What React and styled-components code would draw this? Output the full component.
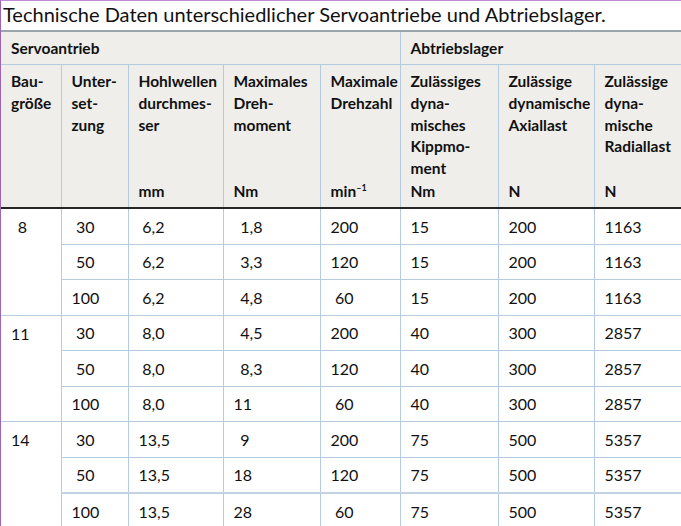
import styled, { createGlobalStyle } from "styled-components";

const Global = createGlobalStyle`
  html, body {
    margin: 0;
    padding: 0;
    background: #ffffff;
    overflow: hidden;
  }
`;

const Page = styled.div`
  width: 720px;
  border-top: 1px solid #c08ad0;
  border-left: 1px solid #a064b4;
  font-family: Lato, "Open Sans", sans-serif;
  color: #111111;
`;

const Title = styled.h1`
  margin: 0;
  height: 29px;
  padding-left: 2px;
  font-size: 20px;
  font-weight: 400;
  line-height: 26px;
  white-space: nowrap;
`;

const Table = styled.table`
  border-collapse: collapse;
  table-layout: fixed;
  width: 693px;
  border-top: 2px solid #9aa6ae;
  font-size: 15.5px;
  font-variant-numeric: tabular-nums;
`;

const GroupHead = styled.th`
  background: #efeeeb;
  text-align: left;
  font-weight: 700;
  height: 32px;
  padding: 0 10px;
  border-bottom: 1px solid #b4cbe2;
  border-right: ${(p) => (p.$divide ? "1px solid #b4cbe2" : "none")};
`;

const ColHead = styled.th`
  background: #efeeeb;
  text-align: left;
  vertical-align: top;
  font-weight: 700;
  padding: 6px 0 4px 10px;
  border-right: 1px solid #b4cbe2;
  border-bottom: 2px solid #262626;
  white-space: nowrap;
`;

const Stack = styled.div`
  display: flex;
  flex-direction: column;
  height: 132px;
  line-height: 21.8px;
`;

const Unit = styled.div`
  margin-top: auto;
`;

const Cell = styled.td`
  height: 34.5px;
  padding: 0 0 0 10px;
  font-size: 16px;
  vertical-align: middle;
  border-right: 1px solid #b4cbe2;
  border-bottom: ${(p) => (p.$thick ? "2px solid #c3d3e6" : "1px solid #b4cbe2")};
  white-space: nowrap;
`;

const GroupCell = styled(Cell)`
  vertical-align: top;
  padding-top: 8px;
`;

const Right = styled.span`
  display: inline-block;
  width: ${(p) => p.$w}px;
  text-align: right;
`;

const Dec = ({ v, w }) => {
  const [i, f] = v.split(",");
  return (
    <span>
      <Right $w={w}>{i}</Right>
      {f !== undefined ? "," + f : ""}
    </span>
  );
};

const data = [
  {
    size: "8",
    rows: [
      ["30", "6,2", "1,8", "200", "15", "200", "1163"],
      ["50", "6,2", "3,3", "120", "15", "200", "1163"],
      ["100", "6,2", "4,8", "60", "15", "200", "1163"],
    ],
  },
  {
    size: "11",
    rows: [
      ["30", "8,0", "4,5", "200", "40", "300", "2857"],
      ["50", "8,0", "8,3", "120", "40", "300", "2857"],
      ["100", "8,0", "11", "60", "40", "300", "2857"],
    ],
  },
  {
    size: "14",
    rows: [
      ["30", "13,5", "9", "200", "75", "500", "5357"],
      ["50", "13,5", "18", "120", "75", "500", "5357"],
      ["100", "13,5", "28", "60", "75", "500", "5357"],
    ],
  },
];

const heads = [
  [["Bau-", "größe"], ""],
  [["Unter-", "set-", "zung"], ""],
  [["Hohlwellen", "durchmes-", "ser"], "mm"],
  [["Maximales", "Dreh-", "moment"], "Nm"],
  [["Maximale", "Drehzahl"], <>min<sup style={{ fontSize: "9px", verticalAlign: "6px" }}>–1</sup></>],
  [["Zulässiges", "dyna-", "misches", "Kippmo-", "ment"], "Nm"],
  [["Zulässige", "dynamische", "Axiallast"], "N"],
  [["Zulässige", "dyna-", "mische", "Radiallast"], "N"],
];

const App = () => {
  return (
    <Page>
      <Global />
      <Title>Technische Daten unterschiedlicher Servoantriebe und Abtriebslager.</Title>
      <Table>
        <colgroup>
          <col style={{ width: 60 }} />
          <col style={{ width: 67 }} />
          <col style={{ width: 95 }} />
          <col style={{ width: 97 }} />
          <col style={{ width: 80 }} />
          <col style={{ width: 98 }} />
          <col style={{ width: 96 }} />
          <col style={{ width: 100 }} />
        </colgroup>
        <thead>
          <tr>
            <GroupHead colSpan={5} $divide>
              Servoantrieb
            </GroupHead>
            <GroupHead colSpan={3}>Abtriebslager</GroupHead>
          </tr>
          <tr>
            {heads.map(([lines, unit], i) => (
              <ColHead key={i}>
                <Stack>
                  {lines.map((l) => (
                    <div key={l}>{l}</div>
                  ))}
                  <Unit>{unit}</Unit>
                </Stack>
              </ColHead>
            ))}
          </tr>
        </thead>
        <tbody>
          {data.map((g, gi) =>
            g.rows.map((r, ri) => {
              const thick = gi === 2 && ri === 1;
              return (
                <tr key={gi + "-" + ri}>
                  {ri === 0 && (
                    <GroupCell rowSpan={3}>
                      <Right $w={16}>{g.size}</Right>
                    </GroupCell>
                  )}
                  <Cell $thick={thick}>
                    <Right $w={23}>{r[0]}</Right>
                  </Cell>
                  <Cell $thick={thick}>
                    <Right $w={26}>{r[1]}</Right>
                  </Cell>
                  <Cell $thick={thick}>
                    <Dec v={r[2]} w={16} />
                  </Cell>
                  <Cell $thick={thick}>
                    <Right $w={23}>{r[3]}</Right>
                  </Cell>
                  <Cell $thick={thick}>{r[4]}</Cell>
                  <Cell $thick={thick}>{r[5]}</Cell>
                  <Cell $thick={thick}>{r[6]}</Cell>
                </tr>
              );
            })
          )}
        </tbody>
      </Table>
    </Page>
  );
};

export default App;
